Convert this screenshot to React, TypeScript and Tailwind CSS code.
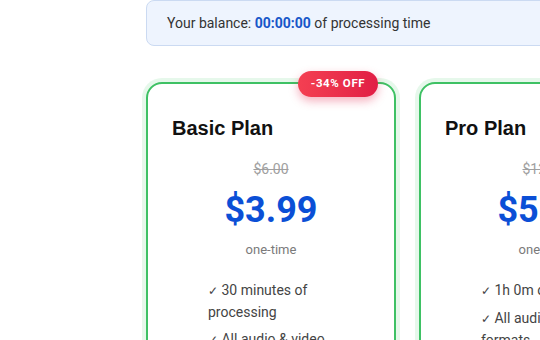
import React from 'react';

type Plan = {
  name: string;
  oldPrice: string;
  price: string;
  period: string;
  features: string[];
  badge?: string;
};

const plans: Plan[] = [
  {
    name: 'Basic Plan',
    oldPrice: '$6.00',
    price: '$3.99',
    period: 'one-time',
    features: ['30 minutes of processing', 'All audio & video formats'],
    badge: '-34% OFF',
  },
  {
    name: 'Pro Plan',
    oldPrice: '$12.00',
    price: '$5.99',
    period: 'one-time',
    features: ['1h 0m of processing', 'All audio & video formats'],
    badge: '-50% OFF',
  },
];

function PlanCard({ plan }: { plan: Plan }) {
  return (
    <div className="relative w-[250px] shrink-0 rounded-[16px] border-2 border-[#3ec164] bg-white px-6 pt-[30px] pb-6 shadow-[0_0_0_4px_rgba(52,199,89,0.12)]">
      {plan.badge && (
        <span className="absolute -top-[13px] right-[16px] flex h-[26px] w-[80px] items-center justify-center rounded-full bg-gradient-to-r from-[#f43f52] to-[#e11d45] text-[11.5px] font-bold tracking-[0.6px] text-white shadow-[0_4px_10px_rgba(225,29,69,0.35)]">
          {plan.badge}
        </span>
      )}
      <h2 className="font-['Liberation_Sans',Arial,sans-serif] text-[20px] leading-[28px] font-bold text-[#111]">
        {plan.name}
      </h2>
      <p className="mt-[17px] text-center text-[14px] leading-[20px] text-[#a0a0a0] line-through">{plan.oldPrice}</p>
      <p className="mt-[11px] text-center text-[36px] leading-[40px] font-bold text-[#0b4fd6]">{plan.price}</p>
      <p className="mt-[11px] text-center text-[13px] leading-[18px] text-[#7a7a7a]">{plan.period}</p>
      <ul className="mt-[21px] pl-[36px] text-[14px] leading-[21px] text-[#444]">
        {plan.features.map((f) => (
          <li key={f} className="mb-[6px]">
            <span className="text-[12px]">✓</span> {f}
          </li>
        ))}
      </ul>
    </div>
  );
}

export default function App() {
  return (
    <div className="h-[340px] w-[540px] overflow-hidden bg-white font-['Roboto','Liberation_Sans',sans-serif]">
      <div className="w-[800px] pl-[146px]">
        <div className="rounded-[8px] border border-[#cbdaf2] bg-[#eef4fe] px-5 py-3 text-[14px] leading-[20px] text-[#333]">
          Your balance: <span className="font-bold text-[#1656c9]">00:00:00</span> of processing time
        </div>
        <div className="mt-[36px] flex gap-[23px]">
          {plans.map((p) => (
            <PlanCard key={p.name} plan={p} />
          ))}
        </div>
      </div>
    </div>
  );
}
